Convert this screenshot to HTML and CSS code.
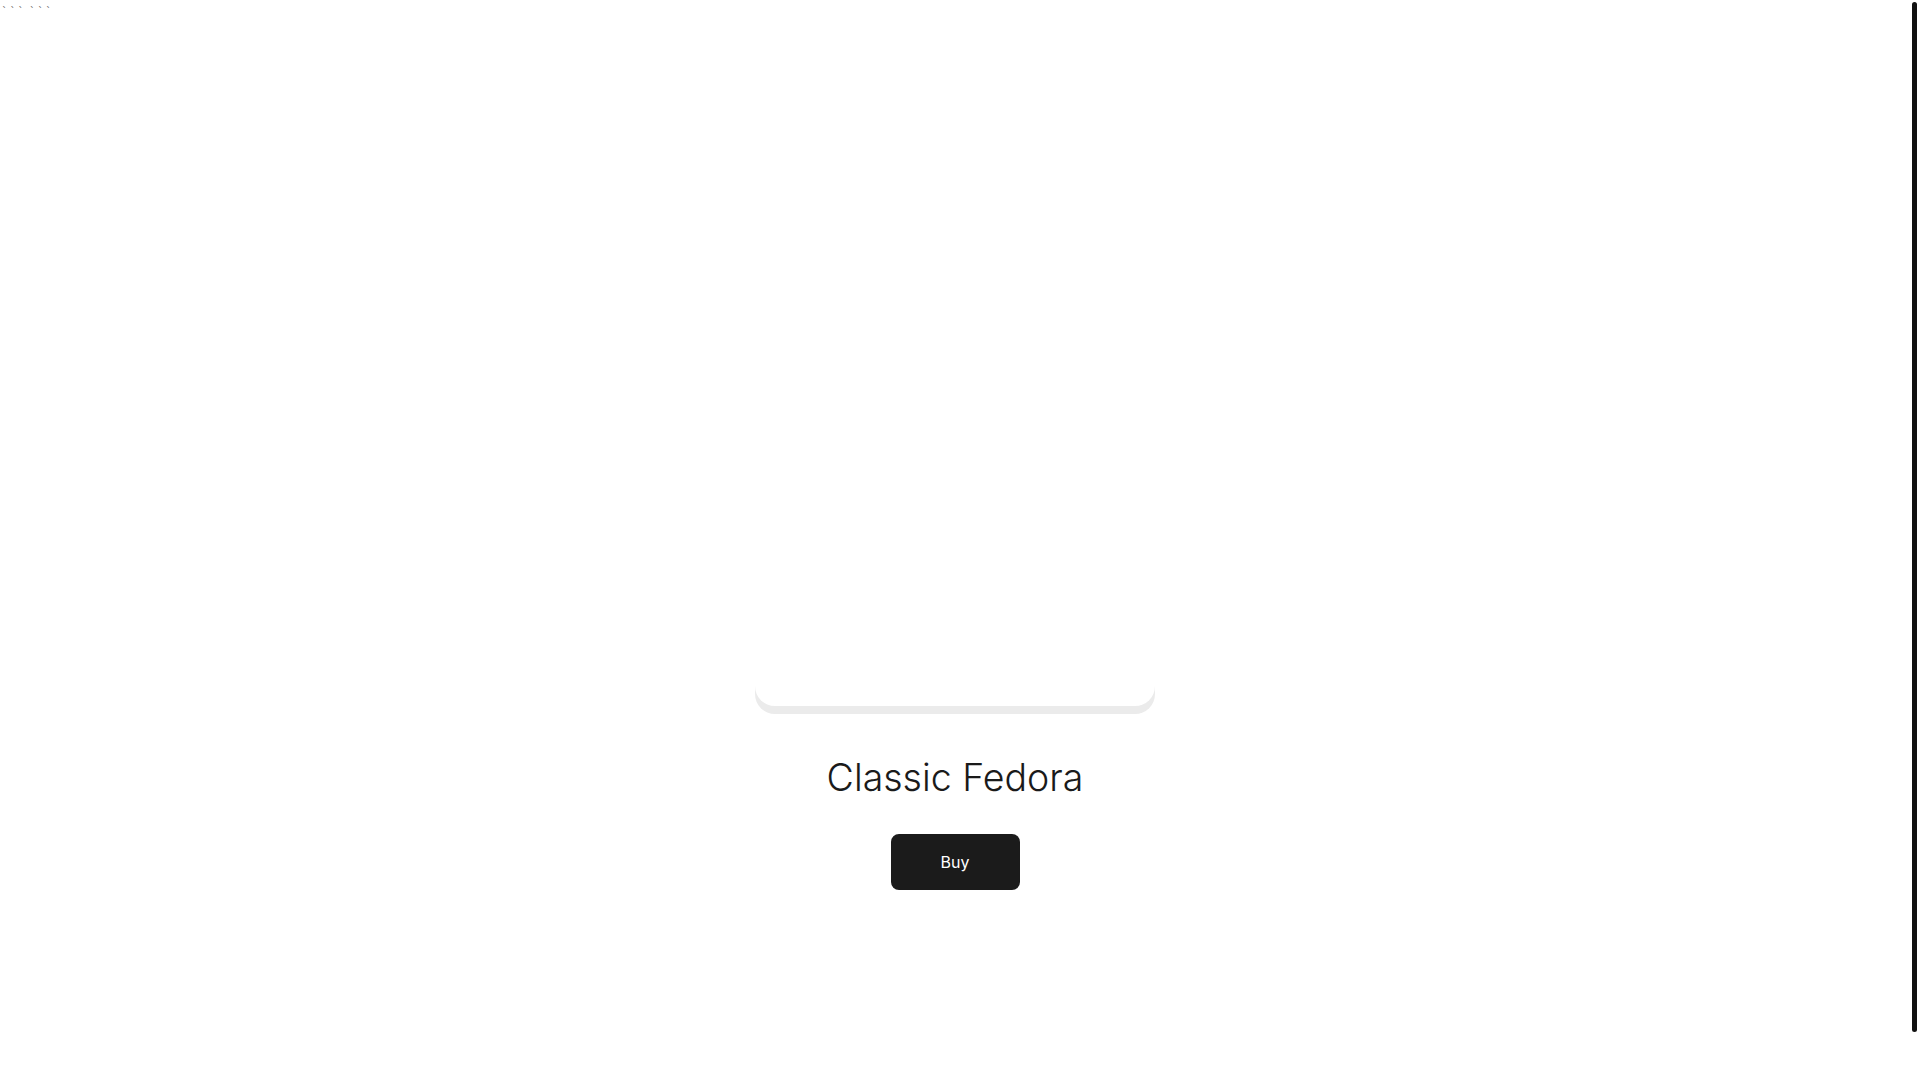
FILE: index.html
```html
<!DOCTYPE html>
<html lang="en">
<head>
<meta charset="utf-8">
<title>Classic Fedora</title>
<link rel="stylesheet" href="styles.css">
</head>
<body>
<div class="marks">` ` `  ` ` `</div>
<main class="product">
  <div class="product-card"></div>
  <h1 class="product-title">Classic Fedora</h1>
  <button class="buy-button" type="button">Buy</button>
</main>
<div class="scroll-thumb" aria-hidden="true"></div>
</body>
</html>
```
FILE: styles.css
```css
html, body {
  margin: 0;
  padding: 0;
  background: #ffffff;
}

body {
  font-family: Inter, "Noto Sans", sans-serif;
  color: #1a1a1a;
  padding-right: 10px;
}

::-webkit-scrollbar {
  width: 0;
  height: 0;
}

.scroll-thumb {
  position: fixed;
  top: 2px;
  right: 3px;
  width: 5px;
  height: 1030px;
  background: #111111;
  border-radius: 3px;
}

.marks {
  box-sizing: border-box;
  height: 16px;
  padding: 8px 0 0 2px;
  font-family: "DejaVu Sans", sans-serif;
  font-size: 10px;
  line-height: 8px;
  letter-spacing: 0px;
  color: #6a6a6a;
  white-space: pre;
}

.product {
  display: flex;
  flex-direction: column;
  align-items: center;
  padding: 290px 0 238px;
}

.product-card {
  width: 400px;
  height: 400px;
  background: #ffffff;
  border-radius: 20px;
  box-shadow: 0 8px 0 #ebebeb;
}

.product-title {
  margin: 50px 0 0;
  font-size: 37.5px;
  line-height: 43px;
  font-weight: 300;
  color: #1a1a1a;
}

.buy-button {
  margin-top: 35px;
  width: 129px;
  height: 56px;
  border: 0;
  border-radius: 8px;
  background: #1b1b1b;
  color: #ffffff;
  font-family: Inter, "Noto Sans", sans-serif;
  font-size: 16px;
  font-weight: 400;
  cursor: pointer;
}
```
